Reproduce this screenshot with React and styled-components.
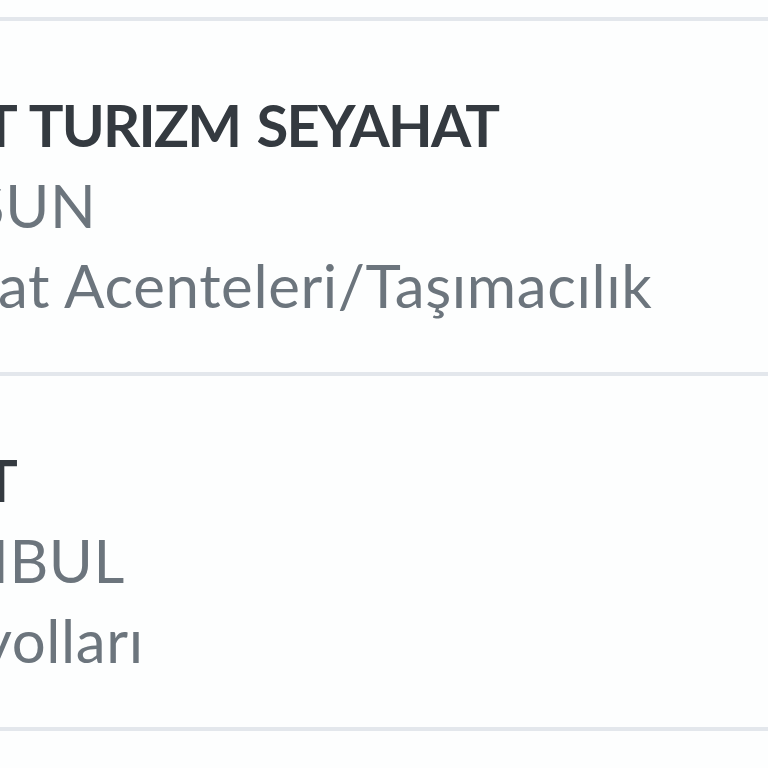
import React from 'react';
import styled, { createGlobalStyle } from 'styled-components';

const GlobalStyle = createGlobalStyle`
  html, body {
    margin: 0;
    padding: 0;
    background: #fdfefe;
    overflow: hidden;
  }
  body {
    font-family: Lato, 'Noto Sans', sans-serif;
  }
`;

const companies = [
  {
    name: 'T TURIZM SEYAHAT',
    city: 'SUN',
    sector: 'at Acenteleri/Taşımacılık',
    shift: [-17, -28, -2],
  },
  {
    name: 'T',
    city: 'NBUL',
    sector: 'yolları',
    shift: [-17, -37, -19],
  },
];

export default function App() {
  return (
    <>
      <GlobalStyle />
      <List>
        <Tail />
        {companies.map((c) => (
          <Item key={c.name + c.city}>
            <Name style={{ marginLeft: c.shift[0] }}>{c.name}</Name>
            <Line style={{ marginLeft: c.shift[1] }}>{c.city}</Line>
            <Line style={{ marginLeft: c.shift[2] }}>{c.sector}</Line>
          </Item>
        ))}
        <Tail />
      </List>
    </>
  );
}

const List = styled.ul`
  list-style: none;
  margin: 0;
  padding: 0;
  overflow: hidden;
  height: 768px;
`;

const Tail = styled.li`
  height: 17px;
  border-bottom: 4px solid #e3e7ec;
  &:last-child {
    border-bottom: none;
    height: 60px;
  }
`;

const Item = styled.li`
  height: 287px;
  padding: 64px 0 0;
  border-bottom: 4px solid #e3e7ec;
  white-space: nowrap;
`;

const Name = styled.div`
  font-size: 58px;
  line-height: 80px;
  font-weight: 700;
  color: #343a40;
  letter-spacing: -1.8px;
  word-spacing: 4px;
`;

const Line = styled.div`
  font-size: 60px;
  line-height: 80px;
  font-weight: 400;
  color: #6c757d;
  letter-spacing: 0.6px;
`;
